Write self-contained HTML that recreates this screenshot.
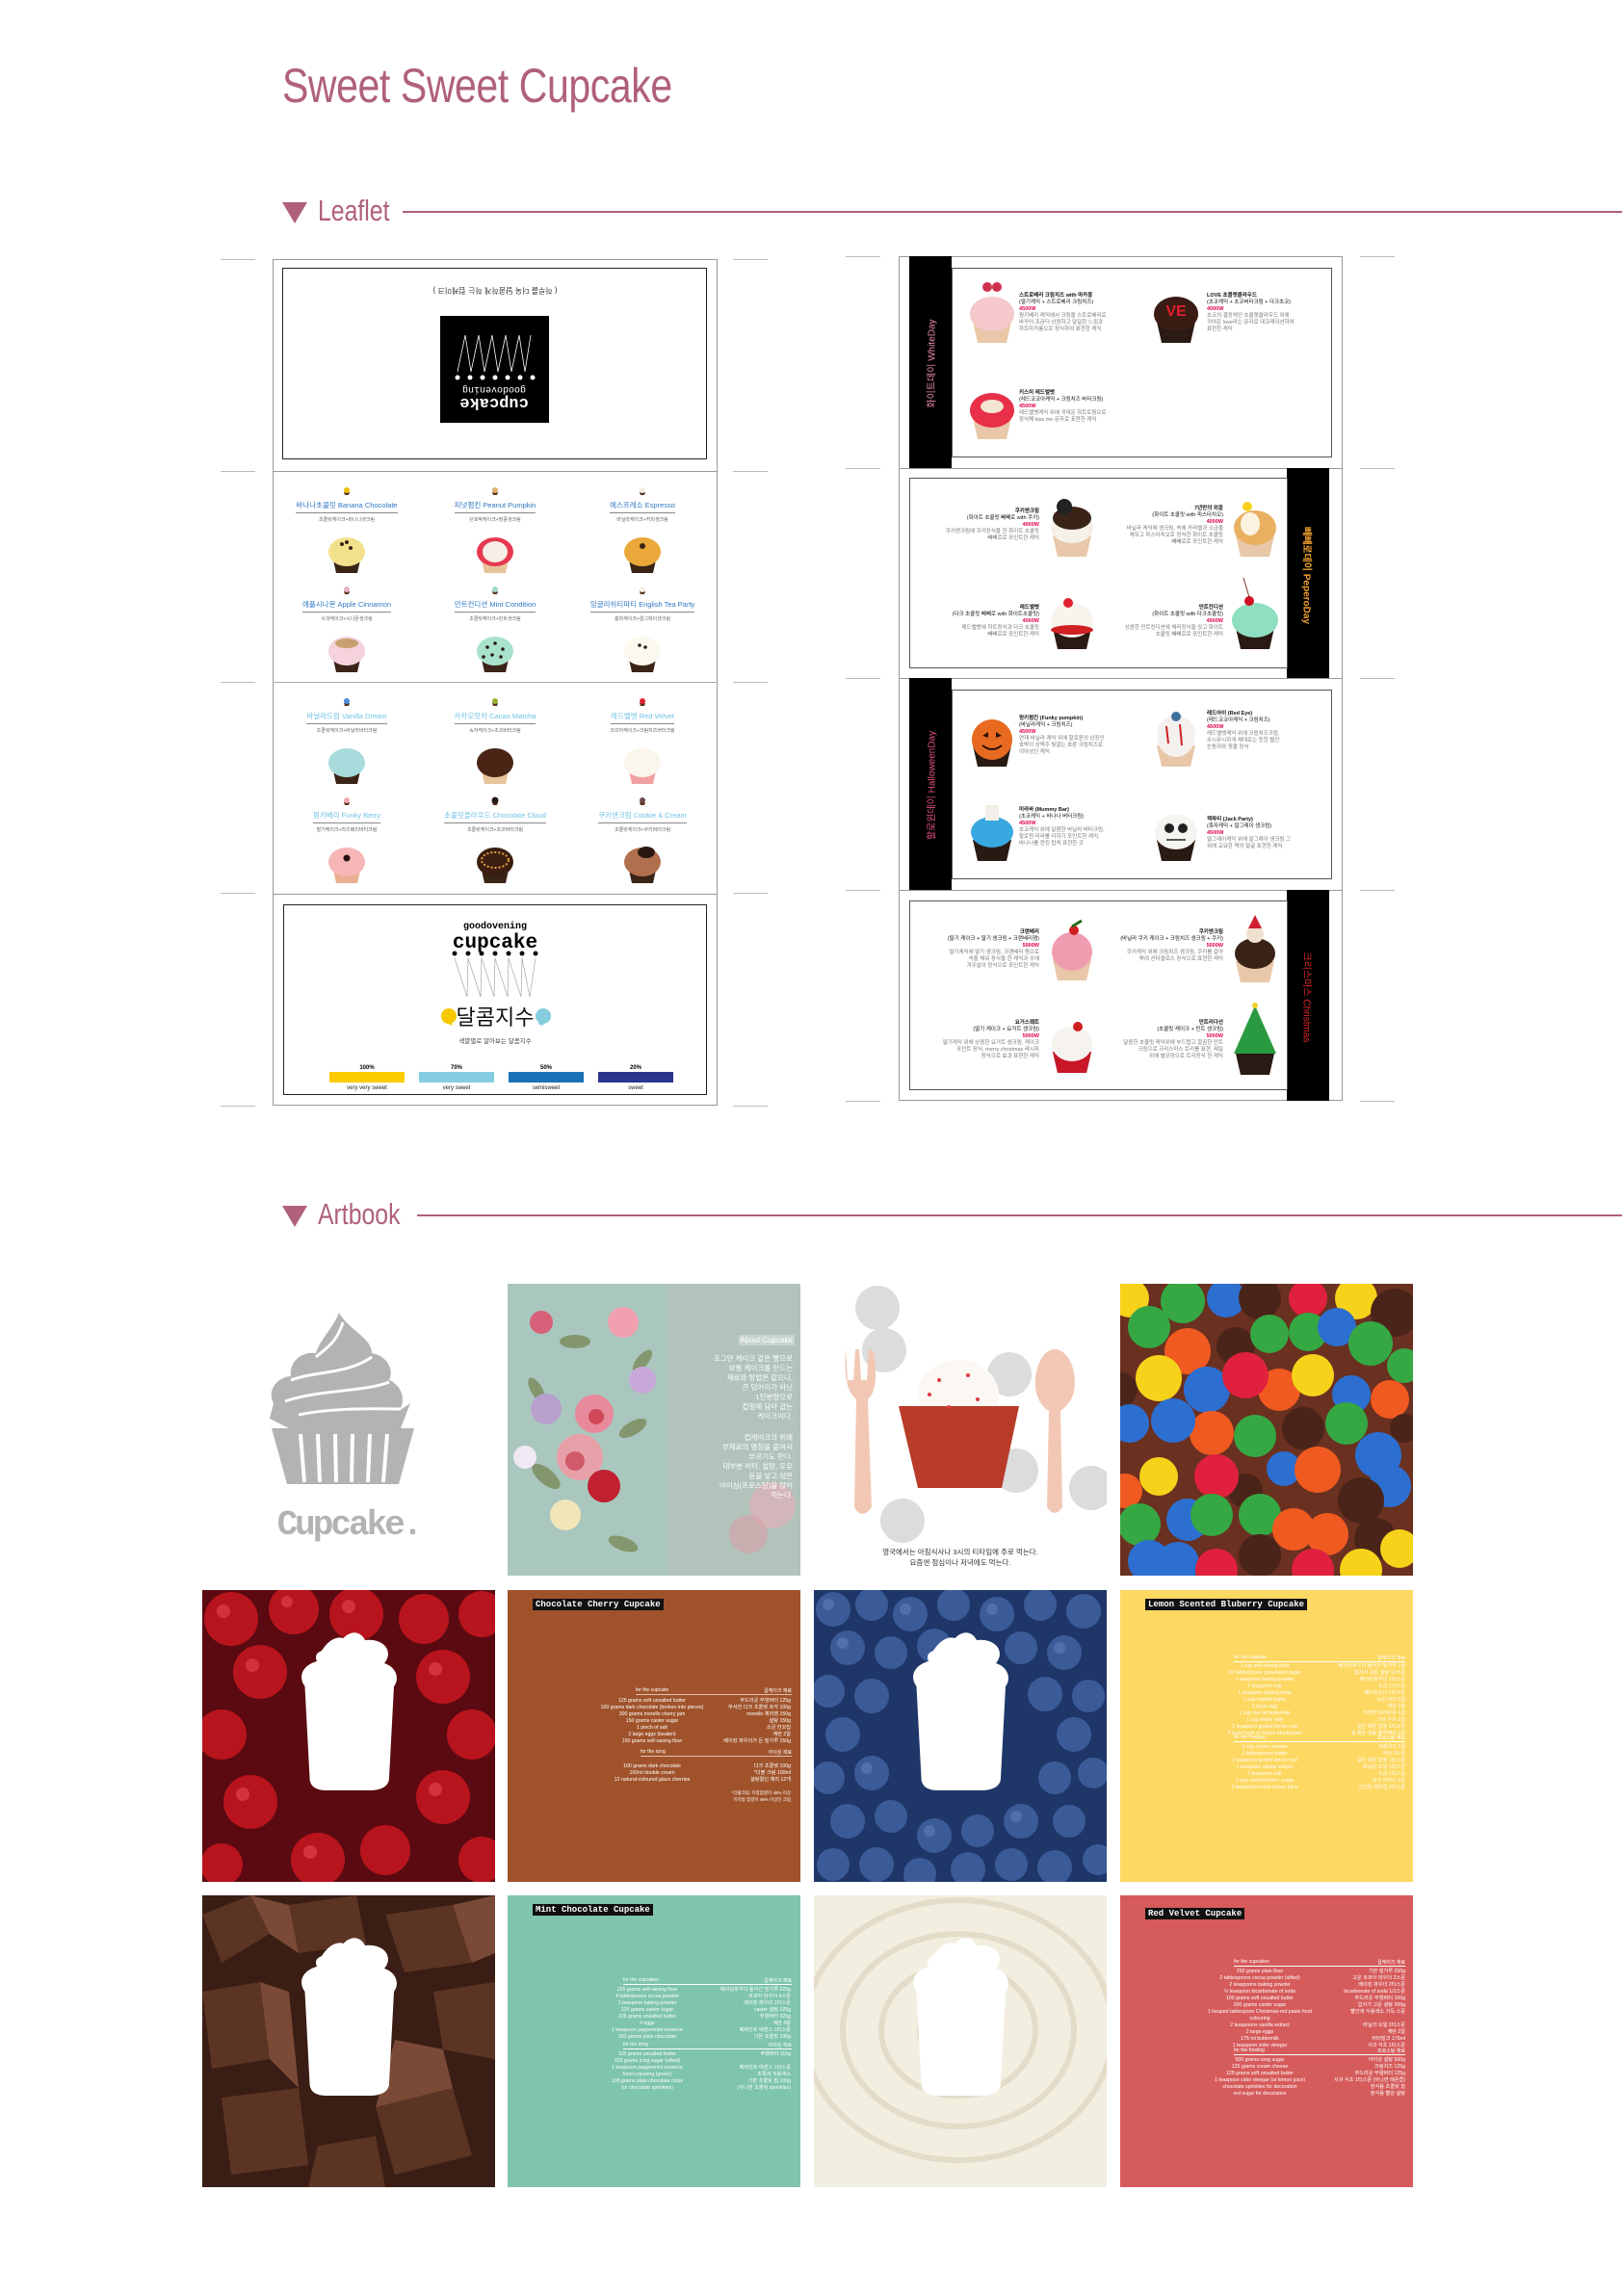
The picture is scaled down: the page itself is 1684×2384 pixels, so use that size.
<!DOCTYPE html>
<html><head><meta charset="utf-8">
<style>
*{margin:0;padding:0;box-sizing:border-box}
body{width:1684px;height:2384px;background:#fff;position:relative;overflow:hidden;font-family:"Liberation Sans","Noto Sans CJK KR",sans-serif}
.a{position:absolute}
.ttl{font-family:"Liberation Sans Narrow","Liberation Sans",sans-serif;color:#b0607b;transform-origin:0 0;white-space:nowrap}
.tick{position:absolute;height:1px;background:#bbb}
.lb{position:absolute;width:150px;text-align:center;margin-left:-75px}
.lb .n{font-size:7.5px;color:#2f78c4;white-space:nowrap;padding-bottom:2px;border-bottom:1px solid #888;display:inline-block}
.lb .s{font-size:5px;color:#666;margin-top:3px;white-space:nowrap}
.lb.l .n{color:#6fc2e4}
.it{position:absolute;font-size:5.5px;line-height:7px;color:#777;white-space:nowrap}
.it b{color:#111;display:block}
.it i{font-style:normal;color:#111;display:block}
.it em{font-style:normal;color:#e0004b;font-weight:bold;display:block}
.it.r{text-align:right}
.rc{position:absolute;font-size:5.2px;line-height:7px;white-space:nowrap}
.tag{position:absolute;background:#111;color:#fff;font-family:"Liberation Mono",monospace;font-weight:bold;font-size:9px;padding:1px 3px;left:26px;top:9px}
.tile{position:absolute;width:304px;height:303px;overflow:hidden}
</style></head><body>

<div class="a ttl" style="left:293px;top:60px;font-size:50px;letter-spacing:-0.5px;transform:scaleX(0.82)">Sweet Sweet Cupcake</div>

<!-- Leaflet header -->
<svg class="a" style="left:293px;top:210px" width="26" height="22"><polygon points="0,0 26,0 13,22" fill="#b0607b"/></svg>
<div class="a ttl" style="left:330px;top:201px;font-size:31px;transform:scaleX(0.8)">Leaflet</div>
<div class="a" style="left:418px;top:219px;width:1266px;height:2px;background:#b0607b"></div>

<!-- ticks left -->
<div class="tick" style="left:229px;top:269px;width:36px"></div><div class="tick" style="left:761px;top:269px;width:36px"></div>
<div class="tick" style="left:229px;top:489px;width:36px"></div><div class="tick" style="left:761px;top:489px;width:36px"></div>
<div class="tick" style="left:229px;top:708px;width:36px"></div><div class="tick" style="left:761px;top:708px;width:36px"></div>
<div class="tick" style="left:229px;top:927px;width:36px"></div><div class="tick" style="left:761px;top:927px;width:36px"></div>
<div class="tick" style="left:229px;top:1148px;width:36px"></div><div class="tick" style="left:761px;top:1148px;width:36px"></div>
<!-- ticks right -->
<div class="tick" style="left:878px;top:266px;width:36px"></div><div class="tick" style="left:1412px;top:266px;width:36px"></div>
<div class="tick" style="left:878px;top:486px;width:36px"></div><div class="tick" style="left:1412px;top:486px;width:36px"></div>
<div class="tick" style="left:878px;top:704px;width:36px"></div><div class="tick" style="left:1412px;top:704px;width:36px"></div>
<div class="tick" style="left:878px;top:924px;width:36px"></div><div class="tick" style="left:1412px;top:924px;width:36px"></div>
<div class="tick" style="left:878px;top:1143px;width:36px"></div><div class="tick" style="left:1412px;top:1143px;width:36px"></div>

<!-- LEFT LEAFLET -->
<div class="a" style="left:283px;top:269px;width:462px;height:879px;border:1px solid #999"></div>
<div class="a" style="left:283px;top:489px;width:462px;height:1px;background:#999"></div>
<div class="a" style="left:283px;top:708px;width:462px;height:1px;background:#aaa"></div>
<div class="a" style="left:283px;top:928px;width:462px;height:1px;background:#999"></div>
<!-- top box -->
<div class="a" style="left:293px;top:278px;width:441px;height:199px;border:1.5px solid #222"></div>
<div class="a" style="left:414px;top:296px;width:200px;text-align:center;font-size:8px;color:#333;transform:rotate(180deg)">( 하루를 더욱 달콤하게 하는 컵케이크 )</div>
<div class="a" style="left:457px;top:328px;width:113px;height:111px;background:#000;overflow:hidden">
 <svg width="113" height="111" viewBox="0 0 113 111"><g stroke="#fff" stroke-width="0.8" fill="none"><path d="M18,58 L26,20 L32,58 L40,20 L46,58 L54,20 L60,58 L68,20 L74,58 L82,20 L88,58 L94,20"/></g>
 <g fill="#fff"><circle cx="18" cy="64" r="2.5"/><circle cx="31" cy="64" r="2.5"/><circle cx="44" cy="64" r="2.5"/><circle cx="57" cy="64" r="2.5"/><circle cx="70" cy="64" r="2.5"/><circle cx="83" cy="64" r="2.5"/><circle cx="96" cy="64" r="2.5"/></g>
 <g transform="rotate(180 56 85)"><text x="56" y="84" text-anchor="middle" font-family="Liberation Mono" font-weight="bold" font-size="17" fill="#fff">cupcake</text><text x="56" y="96" text-anchor="middle" font-family="Liberation Mono" font-size="10" fill="#fff">goodovening</text></g></svg>
</div>

<!-- cupcake grid section 2 -->
<div class="lb" style="left:360px;top:514px"><div class="n">바나나초콜릿 Banana Chocolate</div><div class="s">초콜릿케이크+바나나생크림</div></div>
<div class="lb" style="left:514px;top:514px"><div class="n">피넛펌킨 Peanut Pumpkin</div><div class="s">단호박케이크+땅콩생크림</div></div>
<div class="lb" style="left:667px;top:514px"><div class="n">에스프레소 Espresso</div><div class="s">바닐라케이크+커피생크림</div></div>
<div class="lb" style="left:360px;top:617px"><div class="n">애플시나몬 Apple Cinnamon</div><div class="s">사과케이크+시나몬생크림</div></div>
<div class="lb" style="left:514px;top:617px"><div class="n">민트컨디션 Mint Condition</div><div class="s">초콜릿케이크+민트생크림</div></div>
<div class="lb" style="left:667px;top:617px"><div class="n">잉글리쉬티파티 English Tea Party</div><div class="s">홍차케이크+얼그레이생크림</div></div>
<div class="lb l" style="left:360px;top:733px"><div class="n">바닐라드림 Vanilla Dream</div><div class="s">초콜릿케이크+바닐라버터크림</div></div>
<div class="lb l" style="left:514px;top:733px"><div class="n">카카오맛차 Cacao Matcha</div><div class="s">녹차케이크+초코버터크림</div></div>
<div class="lb l" style="left:667px;top:733px"><div class="n">레드벨벳 Red Velvet</div><div class="s">코코아케이크+크림치즈버터크림</div></div>
<div class="lb l" style="left:360px;top:836px"><div class="n">펑키베리 Funky Berry</div><div class="s">딸기케이크+라즈베리버터크림</div></div>
<div class="lb l" style="left:514px;top:836px"><div class="n">초콜릿클라우드 Chocolate Cloud</div><div class="s">초콜릿케이크+초코버터크림</div></div>
<div class="lb l" style="left:667px;top:836px"><div class="n">쿠키앤크림 Cookie &amp; Cream</div><div class="s">초콜릿케이크+쿠키버터크림</div></div>

<svg class="a" style="left:283px;top:489px" width="462" height="439">
<defs>
<g id="cc"><path d="M-15,2 L15,2 L11,20 L-11,20Z" fill="#3a2418"/></g>
<g id="ccl"><path d="M-15,2 L15,2 L11,20 L-11,20Z" fill="#e8c49a"/></g>
<g id="mini"><path d="M-3,0 L3,0 L2,3 L-2,3Z" fill="#5a3320"/></g>
</defs>
<g transform="translate(77,0)"><use href="#mini" y="22"/><circle cy="20" r="3" fill="#e8c000"/><use href="#cc" y="86"/><ellipse cy="84" rx="19" ry="15" fill="#f2e18a"/><circle cx="-5" cy="76" r="2" fill="#3a2418"/><circle cx="4" cy="80" r="2" fill="#3a2418"/><circle cx="0" cy="74" r="2" fill="#3a2418"/></g>
<g transform="translate(231,0)"><use href="#mini" y="22"/><circle cy="20" r="3" fill="#e0b070"/><use href="#ccl" y="86"/><ellipse cy="84" rx="19" ry="15" fill="#e63950"/><ellipse cy="84" rx="13" ry="11" fill="#f6eee6"/></g>
<g transform="translate(384,0)"><use href="#mini" y="22"/><circle cy="20" r="3" fill="#f3eee0"/><use href="#cc" y="86"/><ellipse cy="84" rx="19" ry="15" fill="#eaa83a"/><circle cx="0" cy="78" r="3" fill="#3a2418"/></g>
<g transform="translate(77,103)"><use href="#mini" y="22"/><circle cy="20" r="3" fill="#e8b0c8"/><use href="#cc" y="86"/><ellipse cy="84" rx="19" ry="15" fill="#f5d2dc"/><ellipse cy="76" rx="12" ry="5" fill="#c8a070"/></g>
<g transform="translate(231,103)"><use href="#mini" y="22"/><circle cy="20" r="3" fill="#9fd9bf"/><use href="#cc" y="86"/><ellipse cy="84" rx="19" ry="15" fill="#a8e2cc"/><g fill="#2a1a10"><circle cx="-8" cy="80" r="1.8"/><circle cx="0" cy="76" r="1.8"/><circle cx="8" cy="82" r="1.8"/><circle cx="-3" cy="88" r="1.8"/><circle cx="6" cy="90" r="1.8"/><circle cx="-12" cy="90" r="1.8"/></g></g>
<g transform="translate(384,103)"><use href="#mini" y="22"/><circle cy="20" r="3" fill="#f6f1e6"/><use href="#cc" y="86"/><ellipse cy="84" rx="19" ry="15" fill="#fbf8ee"/><circle cx="-3" cy="78" r="1.8" fill="#222"/><circle cx="3" cy="80" r="1.8" fill="#222"/></g>
<g transform="translate(77,219)"><use href="#mini" y="22"/><circle cy="20" r="3" fill="#4a8ad8"/><use href="#cc" y="86"/><ellipse cy="84" rx="19" ry="15" fill="#a8dcdc"/></g>
<g transform="translate(231,219)"><use href="#mini" y="22"/><circle cy="20" r="3" fill="#9bb030"/><use href="#ccl" y="86"/><ellipse cy="84" rx="19" ry="15" fill="#4a2414"/></g>
<g transform="translate(384,219)"><use href="#mini" y="22"/><circle cy="20" r="3" fill="#e02030"/><path d="M-15,88 L15,88 L11,106 L-11,106Z" fill="#f0a0a0"/><ellipse cy="84" rx="19" ry="15" fill="#fbf6ec"/></g>
<g transform="translate(77,322)"><use href="#mini" y="22"/><circle cy="20" r="3" fill="#f0a8b0"/><path d="M-15,88 L15,88 L11,106 L-11,106Z" fill="#e8b090"/><ellipse cy="84" rx="19" ry="15" fill="#f6b6b6"/><circle cy="80" r="3.5" fill="#2a1010"/></g>
<g transform="translate(231,322)"><use href="#mini" y="22"/><circle cy="20" r="3.5" fill="#2a1a14"/><use href="#cc" y="86"/><ellipse cy="84" rx="19" ry="15" fill="#3a1e10"/><ellipse cy="82" rx="14" ry="8" fill="none" stroke="#e8a040" stroke-width="2" stroke-dasharray="2 2"/></g>
<g transform="translate(384,322)"><use href="#mini" y="22"/><circle cy="20" r="3" fill="#6a4a4a"/><use href="#cc" y="86"/><ellipse cy="84" rx="19" ry="15" fill="#b0704e"/><ellipse cx="4" cy="74" rx="9" ry="6" fill="#2a1810"/></g>
</svg>

<!-- bottom box -->
<div class="a" style="left:294px;top:939px;width:440px;height:198px;border:1.5px solid #222;background:#fff"></div>
<svg class="a" style="left:294px;top:939px" width="440" height="198">
 <text x="220" y="25" text-anchor="middle" font-family="Liberation Mono" font-size="10" font-weight="bold">goodovening</text>
 <text x="220" y="45" text-anchor="middle" font-family="Liberation Mono" font-size="21" font-weight="bold">cupcake</text>
 <g fill="#111"><circle cx="178" cy="51" r="2.5"/><circle cx="192" cy="51" r="2.5"/><circle cx="206" cy="51" r="2.5"/><circle cx="220" cy="51" r="2.5"/><circle cx="234" cy="51" r="2.5"/><circle cx="248" cy="51" r="2.5"/><circle cx="262" cy="51" r="2.5"/></g>
 <path d="M178,56 L191,96 L192,56 L205,96 L206,56 L219,96 L220,56 L233,96 L234,56 L247,96 L248,56 L256,96 L262,56" stroke="#999" stroke-width="0.6" fill="none"/>
 <circle cx="172" cy="116" r="8" fill="#f8c800"/><path d="M166,122 L176,126 L170,112Z" fill="#f8c800"/>
 <circle cx="270" cy="116" r="8" fill="#86cde0"/>
 <path d="M264,124 L270,126 L272,118Z" fill="#86cde0"/>
 <text x="220" y="125" text-anchor="middle" font-size="22" fill="#111">달콤지수</text>
 <text x="220" y="144" text-anchor="middle" font-size="6.5" fill="#444">색깔별로 알아보는 달콤지수</text>
 <g font-size="6" font-weight="bold" text-anchor="middle"><text x="87" y="171">100%</text><text x="180" y="171">70%</text><text x="273" y="171">50%</text><text x="366" y="171">20%</text></g>
 <rect x="48" y="174" width="78" height="11" fill="#fccb00"/><rect x="141" y="174" width="78" height="11" fill="#85cde0"/><rect x="234" y="174" width="78" height="11" fill="#1b71b8"/><rect x="327" y="174" width="78" height="11" fill="#2a358c"/>
 <g font-size="6" text-anchor="middle" fill="#222"><text x="87" y="192">very very sweet</text><text x="180" y="192">very sweet</text><text x="273" y="192">semisweet</text><text x="366" y="192">sweet</text></g>
</svg>

<!-- RIGHT LEAFLET -->
<div class="a" style="left:933px;top:266px;width:461px;height:877px;border:1px solid #999"></div>
<div class="a" style="left:933px;top:486px;width:461px;height:1px;background:#999"></div>
<div class="a" style="left:933px;top:704px;width:461px;height:1px;background:#999"></div>
<div class="a" style="left:933px;top:924px;width:461px;height:1px;background:#999"></div>
<div class="a" style="left:944px;top:266px;width:44px;height:220px;background:#000"></div>
<div class="a" style="left:1336px;top:486px;width:44px;height:218px;background:#000"></div>
<div class="a" style="left:944px;top:704px;width:44px;height:220px;background:#000"></div>
<div class="a" style="left:1336px;top:924px;width:44px;height:219px;background:#000"></div>
<div class="a" style="left:866px;top:370px;width:200px;text-align:center;transform:rotate(-90deg);color:#e88aa8;font-size:10px">화이트데이 WhiteDay</div>
<div class="a" style="left:1258px;top:590px;width:200px;text-align:center;transform:rotate(90deg);color:#f0a030;font-size:10px;font-weight:bold">빼빼로데이 PeperoDay</div>
<div class="a" style="left:866px;top:808px;width:200px;text-align:center;transform:rotate(-90deg);color:#e0507a;font-size:10px">할로윈데이 HalloweenDay</div>
<div class="a" style="left:1258px;top:1028px;width:200px;text-align:center;transform:rotate(90deg);color:#e0262b;font-size:10px">크리스마스 Christmas</div>
<div class="a" style="left:988px;top:278px;width:395px;height:197px;border:1px solid #555"></div>
<div class="a" style="left:944px;top:496px;width:393px;height:198px;border:1px solid #555"></div>
<div class="a" style="left:988px;top:716px;width:395px;height:197px;border:1px solid #555"></div>
<div class="a" style="left:944px;top:935px;width:393px;height:197px;border:1px solid #555"></div>

<svg class="a" style="left:933px;top:266px" width="461" height="877">
<defs><g id="rl"><path d="M-20,0 L20,0 L15,22 L-15,22Z" fill="#e8c8a8"/></g><g id="rd"><path d="M-20,0 L20,0 L15,22 L-15,22Z" fill="#2a1a14"/></g></defs>
<g transform="translate(97,60)"><use href="#rl" y="8"/><ellipse cy="0" rx="23" ry="18" fill="#f5c8cc"/><circle cx="-5" cy="-28" r="5" fill="#d03050"/><circle cx="5" cy="-28" r="5" fill="#d03050"/></g>
<g transform="translate(288,60)"><use href="#rd" y="8"/><ellipse cy="0" rx="23" ry="18" fill="#3a1c14"/><text x="0" y="2" text-anchor="middle" font-size="16" font-weight="bold" fill="#e02030">VE</text></g>
<g transform="translate(97,160)"><use href="#rl" y="8"/><ellipse cy="0" rx="23" ry="18" fill="#e83048"/><ellipse cy="-4" rx="12" ry="7" fill="#f3e6d0"/></g>
<g transform="translate(180,282)"><use href="#rl" y="8"/><ellipse cy="0" rx="22" ry="16" fill="#f5f0e8"/><ellipse cy="-10" rx="20" ry="12" fill="#3a2418"/><circle cx="-8" cy="-22" r="8" fill="#222"/></g>
<g transform="translate(370,282)"><use href="#rl" y="8"/><ellipse cy="0" rx="22" ry="18" fill="#e8b060"/><ellipse cx="-5" cy="-4" rx="10" ry="12" fill="#fbf2e0"/><circle cx="-8" cy="-22" r="5" fill="#f8d020"/></g>
<g transform="translate(180,378)"><use href="#rd" y="8"/><ellipse cy="0" rx="22" ry="18" fill="#f8f4ee"/><ellipse cy="10" rx="22" ry="5" fill="#d02020"/><circle cx="-4" cy="-18" r="5" fill="#e02030"/></g>
<g transform="translate(370,378)"><use href="#rd" y="8"/><ellipse cy="0" rx="24" ry="18" fill="#8ee0c0"/><circle cx="-6" cy="-20" r="5" fill="#d01020"/><path d="M-6,-24 L-12,-44" stroke="#600" stroke-width="0.8"/></g>
<g transform="translate(97,502)"><use href="#rd" y="6"/><circle cy="0" r="21" fill="#e86a20"/><path d="M-10,-4 L-4,-8 L-4,-2Z M10,-4 L4,-8 L4,-2Z" fill="#2a1008"/><path d="M-10,6 Q0,14 10,6" stroke="#2a1008" stroke-width="2" fill="none"/></g>
<g transform="translate(288,498)"><use href="#rl" y="10"/><ellipse cy="0" rx="20" ry="22" fill="#f4f0ee"/><path d="M-10,-10 L-8,8 M4,-12 L6,10" stroke="#d02020" stroke-width="2"/><circle cy="-20" r="5" fill="#4070a0"/></g>
<g transform="translate(97,598)"><use href="#rd" y="8"/><ellipse cy="0" rx="22" ry="16" fill="#38a8e0"/><rect x="-7" y="-28" width="14" height="16" fill="#f2eee8"/></g>
<g transform="translate(288,598)"><use href="#rd" y="8"/><ellipse cy="0" rx="22" ry="18" fill="#f4f4f0"/><circle cx="-7" cy="-4" r="5" fill="#222"/><circle cx="7" cy="-4" r="5" fill="#222"/><path d="M-10,8 L10,8" stroke="#222" stroke-width="1.5"/></g>
<g transform="translate(180,722)"><use href="#rl" y="8"/><ellipse cy="0" rx="21" ry="20" fill="#f09cb0"/><circle cx="2" cy="-22" r="5" fill="#d02020"/><path d="M0,-26 L10,-32" stroke="#2a6a20" stroke-width="3"/></g>
<g transform="translate(370,722)"><use href="#rl" y="10"/><ellipse cy="2" rx="21" ry="16" fill="#3a2418"/><circle cy="-18" r="9" fill="#f0e0d0"/><path d="M-7,-24 L0,-38 L7,-24Z" fill="#d02030"/></g>
<g transform="translate(180,818)"><use href="#rd" y="8"/><path d="M-20,8 L20,8 L15,30 L-15,30Z" fill="#c81828"/><ellipse cy="0" rx="21" ry="18" fill="#f6f2ee"/><circle cx="6" cy="-18" r="5" fill="#d02020"/></g>
<g transform="translate(370,818)"><use href="#rd" y="10"/><path d="M-22,10 L0,-40 L22,10Z" fill="#2a9a40"/><circle cy="-40" r="3" fill="#f0d020"/></g>
</svg>

<div class="it" style="left:1058px;top:304px"><b>스트로베리 크림치즈 with 마카롱</b><i>(딸기케익 + 스트로베리 크림치즈)</i><em>4500W</em>핑키베리 케익에서 크림을 스트로베리로<br>바꾸어 조금더 상큼하고 달달한 느낌과<br>하트마카롱으로 장식하여 표현한 케익</div>
<div class="it" style="left:1253px;top:304px"><b>LOVE 초콜렛클라우드</b><i>(초코케익 + 초코버터크림 + 다크초코)</i><em>4000W</em>초코의 결정체인 초콜렛클라우드 위에<br>귀여운 love라는 문자로 데코레이션하여<br>표현한 케익</div>
<div class="it" style="left:1058px;top:405px"><b>키스미 레드벨벳</b><i>(레드코코아케익 + 크림치즈 버터크림)</i><em>4500W</em>레드벨벳케익 위에 귀여운 하트토핑으로<br>장식해 kiss me 문자로 표현한 케익</div>

<div class="it r" style="right:605px;top:528px"><b>쿠키앤크림</b><i>(화이트 초콜릿 빼빼로 with 쿠키)</i><em>4000W</em>쿠키앤크림에 쿠키장식을 한 화이트 초콜릿<br>빼빼로로 포인트한 케익</div>
<div class="it r" style="right:414px;top:525px"><b>7년만의 외출</b><i>(화이트 초콜릿 with 피스타치오)</i><em>4000W</em>바닐라 케익에 생크림, 속에 카라멜과 소금을<br>채우고 피스타치오로 장식한 화이트 초콜릿<br>빼빼로로 포인트한 케익</div>
<div class="it r" style="right:605px;top:628px"><b>레드벨벳</b><i>(다크 초콜릿 빼빼로 with 화이트초콜릿)</i><em>4000W</em>레드벨벳에 하트장식과 다크 초콜릿<br>빼빼로로 포인트한 케익</div>
<div class="it r" style="right:414px;top:628px"><b>민트컨디션</b><i>(화이트 초콜릿 with 다크초콜릿)</i><em>4000W</em>상큼한 민트컨디션에 체리장식을 얹고 화이트<br>초콜릿 빼빼로로 포인트한 케익</div>

<div class="it" style="left:1058px;top:743px"><b>펑키펌킨 (Funky pumpkin)</b><i>(바닐라케익 + 크림치즈)</i><em>4500W</em>연재 바닐라 케익 위에 할로윈의 상징인<br>호박이 상쩍주 빛깔는 호른 크림치즈로<br>이아상인 케익</div>
<div class="it" style="left:1253px;top:738px"><b>레드아이 (Red Eye)</b><i>(레드코코아케익 + 크림치즈)</i><em>4500W</em>레드벨벳케익 위에 크림치즈크림,<br>무시무시하게 제대로는 듯한 빨간<br>눈동자와 핏물 장식</div>
<div class="it" style="left:1058px;top:838px"><b>미라바 (Mummy Bar)</b><i>(초코케익 + 바나나 버터크림)</i><em>4500W</em>초코케익 위에 달콤한 바닐라 버터크림,<br>할로윈 미라를 더하기 포인트한 케익,<br>바나나를 깐킹 탑처 표현한 것</div>
<div class="it" style="left:1253px;top:848px"><b>잭파티 (Jack Party)</b><i>(흑자케익 + 얼그레이 생크림)</i><em>4500W</em>얼그레이케익 위에 얼그레이 생크림 그<br>위에 교요한 잭의 얼굴 표현한 케익</div>

<div class="it r" style="right:605px;top:965px"><b>크랜베리</b><i>(딸기 케이크 + 딸기 생크림 + 크랜베리잼)</i><em>5000W</em>딸기케익에 딸기 생크림, 크랜베리 잼으로<br>속을 채워 장식을 한 케익과 우에<br>겨우살이 장식으로 포인트한 케익</div>
<div class="it r" style="right:414px;top:965px"><b>쿠키앤크림</b><i>(바닐라 쿠키 케이크 + 크림치즈 생크림 + 쿠키)</i><em>5000W</em>쿠키케익 위에 크림치즈 생크림, 쿠키를 갈아<br>뿌려 산타클로스 장식으로 표현한 케익</div>
<div class="it r" style="right:605px;top:1059px"><b>요거스퀘트</b><i>(딸기 케이크 + 요거트 생크림)</i><em>5000W</em>딸기케익 위에 상큼한 요거트 생크림, 케이크<br>포인트 장식, merry christmas 레시피<br>장식으로 효과 표현한 케익</div>
<div class="it r" style="right:414px;top:1059px"><b>민트리다선</b><i>(초콜릿 케이크 + 민트 생크림)</i><em>5000W</em>달콤한 초콜릿 케익위에 부드럽고 깔끔한 민트<br>크림으로 크리스마스 트리를 표현, 제일<br>위에 별모양으로 트리장식 한 케익</div>

<!-- ARTBOOK header -->
<svg class="a" style="left:293px;top:1252px" width="26" height="22"><polygon points="0,0 26,0 13,22" fill="#b0607b"/></svg>
<div class="a ttl" style="left:330px;top:1243px;font-size:31px;transform:scaleX(0.8)">Artbook</div>
<div class="a" style="left:433px;top:1261px;width:1251px;height:2px;background:#b0607b"></div>

<svg width="0" height="0" style="position:absolute"><defs><path id="sil" d="M100,73 C100,73 108,56 118,60 C124,52 132,52 136,62 C152,60 160,74 152,86 C162,90 165,102 160,110 L156,205 C156,216 146,218 140,218 L104,218 C98,218 90,216 90,205 L86,110 C80,100 84,88 96,84 C94,78 96,75 100,73 Z"/></defs></svg>

<!-- Tile 1 -->
<div class="tile" style="left:210px;top:1333px">
<svg width="304" height="303" viewBox="0 0 304 303">
 <g fill="#b3b3b3">
 <path d="M74,124 C66,110 80,96 92,96 C90,80 104,70 118,72 C122,58 136,46 142,30 C152,48 176,56 176,72 C190,74 200,88 194,100 C208,106 212,122 204,132 L216,124 L206,150 L90,150 L70,140 Z"/>
 <path d="M72,150 L220,150 L204,208 L88,208 Z"/>
 </g>
 <g stroke="#fff" stroke-width="3" fill="none"><path d="M92,100 C120,90 150,94 176,76"/><path d="M86,122 C120,110 170,112 194,102"/><path d="M100,136 C140,128 180,130 206,130"/><path d="M118,76 C130,66 140,60 146,40"/></g>
 <g stroke="#fff" stroke-width="4"><path d="M102,156 L106,206"/><path d="M120,156 L122,206"/><path d="M138,156 L139,206"/><path d="M156,156 L155,206"/><path d="M174,156 L172,206"/><path d="M192,156 L188,206"/></g>
 <text x="152" y="260" text-anchor="middle" font-family="Liberation Mono" font-weight="bold" font-size="36" fill="#b3b3b3" letter-spacing="-3">Cupcake.</text>
</svg></div>

<!-- Tile 2 -->
<div class="tile" style="left:527px;top:1333px;background:#a9c7be">
<svg width="304" height="303">
 <g fill="#7a8a5a" opacity="0.8"><ellipse cx="40" cy="200" rx="18" ry="8" transform="rotate(40 40 200)"/><ellipse cx="130" cy="150" rx="16" ry="7" transform="rotate(-30 130 150)"/><ellipse cx="70" cy="60" rx="16" ry="7"/><ellipse cx="120" cy="270" rx="16" ry="7" transform="rotate(20 120 270)"/><ellipse cx="30" cy="110" rx="14" ry="6" transform="rotate(60 30 110)"/><ellipse cx="140" cy="80" rx="14" ry="6" transform="rotate(-50 140 80)"/></g>
 <circle cx="75" cy="180" r="24" fill="#e8a0a8"/><circle cx="70" cy="184" r="10" fill="#d05a6a"/>
 <circle cx="90" cy="135" r="20" fill="#e88a9c"/><circle cx="92" cy="138" r="8" fill="#d04858"/>
 <circle cx="100" cy="210" r="17" fill="#c02030"/>
 <circle cx="60" cy="240" r="16" fill="#f2e6b8"/>
 <circle cx="40" cy="130" r="16" fill="#b8a0cc"/>
 <circle cx="120" cy="40" r="16" fill="#f0a0b0"/>
 <circle cx="18" cy="180" r="12" fill="#f0e8f2"/>
 <circle cx="35" cy="40" r="12" fill="#d86078"/>
 <circle cx="140" cy="100" r="14" fill="#c8a8d8"/>
 <rect x="165" y="0" width="139" height="303" fill="#b8c0b8" opacity="0.55"/>
 <circle cx="275" cy="230" r="24" fill="#e0b0b8" opacity="0.7"/><circle cx="250" cy="260" r="20" fill="#d8a0a8" opacity="0.6"/>
 <rect x="240" y="53" width="58" height="11" fill="#fff" opacity="0.3"/>
 <text x="296" y="61" text-anchor="end" font-size="8" fill="#fff">About Cupcake</text>
 <g font-size="7.5" fill="#fff" text-anchor="end"><text x="296" y="80">조그만 케이크 같은 빵으로</text><text x="296" y="90">보통 케이크를 만드는</text><text x="296" y="100">재료와 방법은 같으나,</text><text x="296" y="110">큰 덩어리가 아닌</text><text x="296" y="120">1인분량으로</text><text x="296" y="130">컵형에 담아 굽는</text><text x="296" y="140">케이크이다.</text><text x="296" y="162">컵케이크의 위에</text><text x="296" y="172">부재료의 명칭을 붙여서</text><text x="296" y="182">부르기도 한다.</text><text x="296" y="192">대부분 버터, 설탕, 우유</text><text x="296" y="202">등을 넣고 섞은</text><text x="296" y="212">아이싱(프로스팅)을 얹어</text><text x="296" y="222">먹는다.</text></g>
</svg></div>

<!-- Tile 3 -->
<div class="tile" style="left:845px;top:1333px;background:#fff">
<svg width="304" height="303">
 <g fill="#dcdcdc"><circle cx="66" cy="25" r="23"/><circle cx="73" cy="69" r="23"/><circle cx="203" cy="94" r="23"/><circle cx="210" cy="194" r="23"/><circle cx="288" cy="212" r="23"/><circle cx="92" cy="246" r="23"/></g>
 <path d="M33,68 L35,100 L41,100 L43,68 L47,68 L49,100 L55,100 L57,68 L62,70 Q68,110 56,120 L60,232 Q50,246 42,232 L44,120 Q30,110 33,68Z" fill="#f2c8b4"/>
 <path d="M250,68 C264,68 274,90 270,112 C266,126 258,130 256,132 L258,232 Q250,244 242,232 L244,132 C236,128 228,114 230,98 C232,80 240,68 250,68Z" fill="#f2c8b4"/>
 <ellipse cx="150" cy="115" rx="42" ry="36" fill="#fbf8f4"/>
 <path d="M88,127 L213,127 L195,212 L108,212 Z" fill="#b83a28"/>
 <g fill="#e03a40"><circle cx="130" cy="100" r="2"/><circle cx="160" cy="95" r="2"/><circle cx="140" cy="128" r="2"/><circle cx="170" cy="120" r="2"/><circle cx="120" cy="115" r="2"/></g>
 <text x="152" y="281" text-anchor="middle" font-size="7.5" fill="#333">영국에서는 아침식사나 3시의 티타임에 주로 먹는다.</text>
 <text x="152" y="292" text-anchor="middle" font-size="7.5" fill="#333">요즘엔 점심이나 저녁에도 먹는다.</text>
</svg></div>

<!-- Tile 4 -->
<div class="tile" style="left:1163px;top:1333px;background:#6a3020">
<svg width="304" height="303">
<circle cx="10" cy="15" r="20" fill="#f6d21a"/><circle cx="65" cy="18" r="23" fill="#35a843"/><circle cx="110" cy="15" r="20" fill="#2c6fd1"/><circle cx="145" cy="15" r="22" fill="#4a2418"/><circle cx="195" cy="15" r="20" fill="#e0203c"/><circle cx="245" cy="15" r="22" fill="#f6d21a"/><circle cx="285" cy="30" r="25" fill="#4a2418"/>
<circle cx="30" cy="45" r="22" fill="#35a843"/><circle cx="120" cy="65" r="20" fill="#4a2418"/><circle cx="155" cy="52" r="20" fill="#35a843"/><circle cx="195" cy="50" r="20" fill="#35a843"/><circle cx="225" cy="45" r="20" fill="#2c6fd1"/><circle cx="260" cy="62" r="23" fill="#35a843"/><circle cx="295" cy="85" r="18" fill="#35a843"/>
<circle cx="70" cy="70" r="24" fill="#f05a20"/><circle cx="0" cy="110" r="18" fill="#4a2418"/>
<circle cx="165" cy="110" r="22" fill="#f05a20"/><circle cx="240" cy="115" r="20" fill="#2c6fd1"/><circle cx="280" cy="120" r="20" fill="#f05a20"/>
<circle cx="40" cy="98" r="24" fill="#f6d21a"/><circle cx="90" cy="110" r="24" fill="#2c6fd1"/><circle cx="130" cy="95" r="24" fill="#e0203c"/><circle cx="200" cy="95" r="22" fill="#f6d21a"/>
<circle cx="10" cy="145" r="20" fill="#2c6fd1"/><circle cx="95" cy="155" r="23" fill="#f05a20"/><circle cx="55" cy="142" r="23" fill="#2c6fd1"/><circle cx="140" cy="158" r="22" fill="#35a843"/><circle cx="190" cy="150" r="22" fill="#4a2418"/><circle cx="235" cy="145" r="22" fill="#35a843"/><circle cx="295" cy="150" r="15" fill="#4a2418"/><circle cx="268" cy="178" r="24" fill="#2c6fd1"/>
<circle cx="5" cy="215" r="18" fill="#f05a20"/><circle cx="130" cy="215" r="18" fill="#4a2418"/><circle cx="40" cy="200" r="20" fill="#f6d21a"/><circle cx="100" cy="200" r="23" fill="#e0203c"/><circle cx="170" cy="192" r="18" fill="#2c6fd1"/><circle cx="205" cy="193" r="24" fill="#f05a20"/><circle cx="280" cy="210" r="22" fill="#2c6fd1"/><circle cx="250" cy="225" r="24" fill="#4a2418"/>
<circle cx="20" cy="250" r="22" fill="#35a843"/><circle cx="70" cy="245" r="22" fill="#2c6fd1"/><circle cx="95" cy="240" r="22" fill="#35a843"/><circle cx="145" cy="240" r="22" fill="#35a843"/><circle cx="180" cy="255" r="22" fill="#f05a20"/><circle cx="215" cy="260" r="22" fill="#f05a20"/><circle cx="265" cy="265" r="22" fill="#4a2418"/><circle cx="290" cy="275" r="20" fill="#f6d21a"/>
<circle cx="30" cy="288" r="22" fill="#2c6fd1"/><circle cx="60" cy="290" r="22" fill="#2c6fd1"/><circle cx="145" cy="282" r="22" fill="#4a2418"/><circle cx="100" cy="297" r="22" fill="#e0203c"/><circle cx="200" cy="297" r="22" fill="#e0203c"/><circle cx="250" cy="297" r="22" fill="#f6d21a"/>
</svg></div>

<!-- Tile 5 -->
<div class="tile" style="left:210px;top:1651px;background:#5a0a10">
<svg width="304" height="303">
<g fill="#b8141e"><circle cx="30" cy="30" r="28"/><circle cx="95" cy="20" r="26"/><circle cx="160" cy="25" r="28"/><circle cx="230" cy="30" r="26"/><circle cx="290" cy="25" r="24"/><circle cx="60" cy="85" r="28"/><circle cx="250" cy="90" r="28"/><circle cx="20" cy="150" r="26"/><circle cx="280" cy="150" r="26"/><circle cx="50" cy="220" r="28"/><circle cx="250" cy="215" r="28"/><circle cx="120" cy="280" r="28"/><circle cx="190" cy="270" r="26"/><circle cx="20" cy="285" r="22"/><circle cx="290" cy="280" r="24"/><circle cx="160" cy="90" r="24"/></g>
<g fill="#e04048" opacity="0.7"><circle cx="22" cy="22" r="7"/><circle cx="88" cy="12" r="6"/><circle cx="152" cy="17" r="7"/><circle cx="52" cy="78" r="7"/><circle cx="242" cy="82" r="7"/><circle cx="42" cy="212" r="7"/><circle cx="242" cy="207" r="7"/><circle cx="112" cy="272" r="7"/></g>
<g transform="translate(99,42) scale(1.25,1) translate(-80,-52)"><use href="#sil" fill="#fff"/></g>
</svg></div>

<!-- Tile 6 -->
<div class="tile" style="left:527px;top:1651px;background:#a0532b;color:#fff">
<div class="tag">Chocolate Cherry Cupcake</div>
<div class="a" style="left:133px;top:101px;width:162px;border-bottom:1px solid #e0c0b0;font-size:5px">for the cupcake<span style="float:right">컵케이크 재료</span></div>
<div class="rc" style="left:90px;top:112px;width:120px;text-align:center">125 grams soft unsalted butter<br>100 grams dark chocolate (broken into pieces)<br>300 grams morello cherry jam<br>150 grams caster sugar<br>1 pinch of salt<br>2 large eggs (beaten)<br>150 grams self-raising flour</div>
<div class="rc" style="right:10px;top:112px;text-align:right">부드러운 무염버터 125g<br>부서진 다크 초콜렛 조각 100g<br>morello 체리잼 150g<br>설탕 150g<br>소금 한꼬집<br>계란 2알<br>베이킹 파우더가 든 밀가루 150g</div>
<div class="a" style="left:138px;top:165px;width:157px;border-bottom:1px solid #e0c0b0;font-size:5px">for the icing<span style="float:right">아이싱 재료</span></div>
<div class="rc" style="left:90px;top:180px;width:120px;text-align:center">100 grams dark chocolate<br>100ml double cream<br>12 natural-coloured glace cherries</div>
<div class="rc" style="right:10px;top:180px;text-align:right">다크 초콜렛 100g<br>*더블 크림 100ml<br>설탕절인 체리 12개</div>
<div class="rc" style="right:10px;top:207px;text-align:right;font-size:4.5px">*더블크림: 지방함량이 48% 이상<br>유지방 함량이 48% 이상인 크림</div>
</div>

<!-- Tile 7 -->
<div class="tile" style="left:845px;top:1651px;background:#1f3668">
<svg width="304" height="303">
<g fill="#3b5b98"><circle cx="20" cy="20" r="18"/><circle cx="60" cy="15" r="17"/><circle cx="100" cy="25" r="18"/><circle cx="145" cy="15" r="17"/><circle cx="190" cy="25" r="18"/><circle cx="235" cy="15" r="17"/><circle cx="280" cy="22" r="18"/><circle cx="35" cy="60" r="18"/><circle cx="80" cy="65" r="17"/><circle cx="125" cy="58" r="18"/><circle cx="215" cy="60" r="17"/><circle cx="260" cy="65" r="18"/><circle cx="15" cy="105" r="17"/><circle cx="60" cy="110" r="18"/><circle cx="240" cy="108" r="18"/><circle cx="285" cy="110" r="17"/><circle cx="30" cy="150" r="18"/><circle cx="270" cy="150" r="18"/><circle cx="15" cy="195" r="17"/><circle cx="60" cy="190" r="18"/><circle cx="250" cy="195" r="17"/><circle cx="290" cy="190" r="16"/><circle cx="35" cy="240" r="18"/><circle cx="80" cy="235" r="17"/><circle cx="125" cy="255" r="18"/><circle cx="170" cy="250" r="17"/><circle cx="215" cy="240" r="18"/><circle cx="265" cy="240" r="17"/><circle cx="20" cy="285" r="17"/><circle cx="65" cy="285" r="18"/><circle cx="110" cy="295" r="17"/><circle cx="160" cy="290" r="18"/><circle cx="205" cy="285" r="17"/><circle cx="250" cy="288" r="18"/><circle cx="295" cy="280" r="16"/></g>
<g fill="#5f7fb8" opacity="0.6"><circle cx="15" cy="15" r="6"/><circle cx="95" cy="20" r="6"/><circle cx="185" cy="20" r="6"/><circle cx="30" cy="55" r="6"/><circle cx="255" cy="60" r="6"/><circle cx="55" cy="185" r="6"/><circle cx="120" cy="250" r="6"/><circle cx="210" cy="235" r="6"/></g>
<g transform="translate(99,42) scale(1.25,1) translate(-80,-52)"><use href="#sil" fill="#fff"/></g>
</svg></div>

<!-- Tile 8 -->
<div class="tile" style="left:1163px;top:1651px;background:#fdd862;color:#fff">
<div class="tag">Lemon Scented Bluberry Cupcake</div>
<div class="a" style="left:118px;top:67px;width:178px;border-bottom:1px solid #fff;font-size:5px">for the cupcake<span style="float:right">컵케이크 재료</span></div>
<div class="rc" style="left:80px;top:76px;width:140px;text-align:center">1 cup self-raising flour<br>10 tablespoons granulated sugar<br>1 teaspoon baking powder<br>1 teaspoon salt<br>1 teaspoon baking soda<br>1 cup melted butter<br>1 large egg<br>1 cup low-fat buttermilk<br>1 cup whole milk<br>1 teaspoon grated lemon rind<br>3 cups fresh or frozen blueberries</div>
<div class="rc" style="right:8px;top:76px;text-align:right">베이킹파우더 들어간 밀가루 1컵<br>입자가 굵은 설탕 10스푼<br>베이킹파우더 1티스푼<br>소금 1티스푼<br>베이킹소다 1티스푼<br>녹인 버터 1컵<br>계란 1알<br>저지방 버터우유 1컵<br>그냥 우유 1컵<br>갈은 레몬 껍질 1티스푼<br>생 혹은 냉동 블루베리 3컵</div>
<div class="a" style="left:118px;top:150px;width:178px;border-bottom:1px solid #fff;font-size:5px">for the frosting<span style="float:right">프로스팅 재료</span></div>
<div class="rc" style="left:80px;top:160px;width:140px;text-align:center">1 cup cream cheese<br>2 tablespoons butter<br>1 teaspoon grated lemon rind<br>1 teaspoon vanilla extract<br>1 teaspoon salt<br>1 cup confectioners' sugar<br>2 teaspoons fresh lemon juice</div>
<div class="rc" style="right:8px;top:160px;text-align:right">크림치즈 1컵<br>버터 2스푼<br>갈은 레몬 껍질 1티스푼<br>바닐라 오일 1티스푼<br>소금 1티스푼<br>슈가 파우더 1컵<br>신선한 레몬즙 2티스푼</div>
</div>

<!-- Tile 9 -->
<div class="tile" style="left:210px;top:1968px;background:#3a1d14">
<svg width="304" height="303">
<g fill="#5c3424"><polygon points="0,20 50,0 70,40 20,70"/><polygon points="90,10 160,0 170,50 100,60"/><polygon points="190,20 260,10 280,70 210,80"/><polygon points="240,100 304,90 304,170 250,160"/><polygon points="0,100 60,90 70,170 10,180"/><polygon points="20,210 100,200 110,280 30,290"/><polygon points="180,220 260,200 280,270 200,290"/><polygon points="120,260 180,250 190,303 110,303"/></g>
<g fill="#7a4a36"><polygon points="50,0 90,10 100,60 70,40"/><polygon points="260,10 304,0 304,60 280,70"/><polygon points="200,150 250,160 260,200 180,220"/><polygon points="60,90 90,100 100,200 70,170"/></g>
<g transform="translate(99,42) scale(1.25,1) translate(-80,-52)"><use href="#sil" fill="#fff"/></g>
</svg></div>

<!-- Tile 10 -->
<div class="tile" style="left:527px;top:1968px;background:#7ec5ab;color:#fff">
<div class="tag">Mint Chocolate Cupcake</div>
<div class="a" style="left:120px;top:85px;width:175px;border-bottom:1px solid #fff;font-size:5px">for the cupcakes<span style="float:right">컵케이크 재료</span></div>
<div class="rc" style="left:75px;top:95px;width:140px;text-align:center">225 grams self-raising flour<br>4 tablespoons cocoa powder<br>1 teaspoon baking powder<br>225 grams caster sugar<br>225 grams unsalted butter<br>4 eggs<br>1 teaspoon peppermint essence<br>100 grams plain chocolate</div>
<div class="rc" style="right:10px;top:95px;text-align:right">베이킹파우더 들어간 밀가루 225g<br>코코아 파우더 4스푼<br>베이킹 파우더 1티스푼<br>caster 설탕 225g<br>무염버터 225g<br>계란 4알<br>페퍼민트 에센스 1티스푼<br>기본 초콜릿 100g</div>
<div class="a" style="left:120px;top:152px;width:175px;border-bottom:1px solid #fff;font-size:5px">for the icing<span style="float:right">아이싱 재료</span></div>
<div class="rc" style="left:75px;top:162px;width:140px;text-align:center">115 grams unsalted butter<br>225 grams icing sugar (sifted)<br>1 teaspoon peppermint essence<br>food colouring (green)<br>100 grams plain chocolate chips<br>(or chocolate sprinkles)</div>
<div class="rc" style="right:10px;top:162px;text-align:right">무염버터 115g<br><br>페퍼민트 에센스 1티스푼<br>초록색 식용색소<br>기본 초콜릿 칩 100g<br>(아니면 초콜릿 sprinkles)</div>
</div>

<!-- Tile 11 -->
<div class="tile" style="left:845px;top:1968px;background:#f2eee0">
<svg width="304" height="303">
<g fill="none" stroke="#e2dcc8" stroke-width="6"><ellipse cx="150" cy="140" rx="40" ry="34"/><ellipse cx="150" cy="140" rx="80" ry="68"/><ellipse cx="150" cy="140" rx="120" ry="100"/><ellipse cx="150" cy="140" rx="160" ry="135"/></g>
<g transform="translate(99,42) scale(1.25,1) translate(-80,-52)"><use href="#sil" fill="#fff"/></g>
</svg></div>

<!-- Tile 12 -->
<div class="tile" style="left:1163px;top:1968px;background:#d65b5b;color:#fff">
<div class="tag" style="top:13px">Red Velvet Cupcake</div>
<div class="a" style="left:118px;top:66px;width:178px;border-bottom:1px solid #fff;font-size:5px">for the cupcakes<span style="float:right">컵케이크 재료</span></div>
<div class="rc" style="left:70px;top:76px;width:150px;text-align:center">250 grams plain flour<br>2 tablespoons cocoa powder (sifted)<br>2 teaspoons baking powder<br>½ teaspoon bicarbonate of soda<br>100 grams soft unsalted butter<br>200 grams caster sugar<br>1 heaped tablespoon Christmas-red paste food<br>colouring<br>2 teaspoons vanilla extract<br>2 large eggs<br>175 ml buttermilk<br>1 teaspoon cider vinegar</div>
<div class="rc" style="right:8px;top:76px;text-align:right">기본 밀가루 250g<br>고운 코코아 파우더 2스푼<br>베이킹 파우더 2티스푼<br>bicarbonate of soda 1/2스푼<br>부드러운 무염버터 100g<br>입자가 고운 설탕 200g<br>빨간색 식용색소 가득 스푼<br><br>바닐라 오일 2티스푼<br>계란 2알<br>버터밀크 175ml<br>사과 식초 1티스푼</div>
<div class="a" style="left:118px;top:158px;width:178px;border-bottom:1px solid #fff;font-size:5px">for the frosting<span style="float:right">프로스팅 재료</span></div>
<div class="rc" style="left:70px;top:168px;width:150px;text-align:center">500 grams icing sugar<br>125 grams cream cheese<br>125 grams soft unsalted butter<br>1 teaspoon cider vinegar (or lemon juice)<br>chocolate sprinkles for decoration<br>red sugar for decoration</div>
<div class="rc" style="right:8px;top:168px;text-align:right">아이싱 설탕 500g<br>크림치즈 125g<br>부드러운 무염버터 125g<br>사과 식초 1티스푼 (아니면 레몬즙)<br>장식용 초콜릿 칩<br>장식용 빨강 설탕</div>
</div>

</body></html>
